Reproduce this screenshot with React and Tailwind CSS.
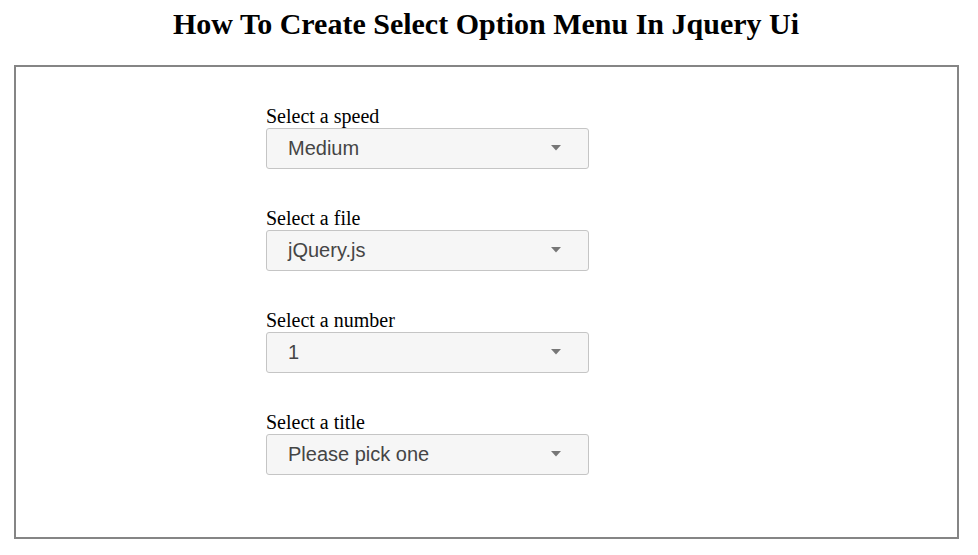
import React from 'react';

const FIELDS = [
  { label: 'Select a speed', value: 'Medium' },
  { label: 'Select a file', value: 'jQuery.js' },
  { label: 'Select a number', value: '1' },
  { label: 'Select a title', value: 'Please pick one' },
];

function SelectMenu({ value }) {
  return (
    <div className="w-[323px] h-[41px] flex items-center justify-between bg-[#f6f6f6] border border-[#c5c5c5] rounded-[3px] pl-[21px] pr-[27px] pb-[2px] cursor-pointer">
      <span className="text-[20px] text-[#454545] font-['Liberation_Sans',Arial,sans-serif] leading-none">{value}</span>
      <svg width="10" height="6" viewBox="0 0 10 6">
        <path d="M0 0 L10 0 L5 5.5 Z" fill="#777" />
      </svg>
    </div>
  );
}

export default function App() {
  return (
    <div className="bg-white min-h-[555px] font-['Liberation_Serif','Times_New_Roman',serif] text-black">
      <h1 className="text-[30px] font-bold text-center pt-[6px] pr-[6px] leading-[36px]">How To Create Select Option Menu In Jquery Ui</h1>
      {/* demo box */}
      <div className="ml-[14px] mt-[23px] w-[945px] h-[474px] border-2 border-[#858585] pl-[250px] pt-[40px]">
        <div className="flex flex-col gap-[40px]">
          {FIELDS.map(f => (
            <div key={f.label} className="flex flex-col">
              <label className="text-[20px] leading-[21px] -mt-px mb-px">{f.label}</label>
              <SelectMenu value={f.value} />
            </div>
          ))}
        </div>
      </div>
    </div>
  );
}
